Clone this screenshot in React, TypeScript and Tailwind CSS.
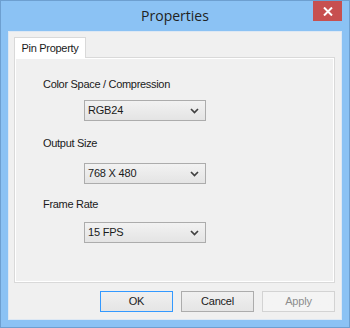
import { ReactNode } from 'react';

const ui = { fontFamily: '"Liberation Sans", Arial, sans-serif' };

function Chevron() {
  return (
    <svg width="9" height="6" viewBox="0 0 9 6" className="shrink-0">
      <path d="M1 1 L4.5 4.5 L8 1" fill="none" stroke="#404040" strokeWidth="1.7" />
    </svg>
  );
}

function Combo({ value }: { value: string }) {
  return (
    <div className="ml-[69px] flex h-[21px] w-[122px] items-center justify-between border border-[#acacac] bg-gradient-to-b from-[#f2f2f2] to-[#e4e4e4] pl-[3px] pr-[6px] text-[11px] tracking-[-0.2px] text-[#1a1a1a]">
      <span>{value}</span>
      <Chevron />
    </div>
  );
}

function Label({ children, className }: { children: ReactNode; className?: string }) {
  return (
    <div className={`ml-[28px] h-[16px] text-[11px] leading-[16px] tracking-[-0.3px] text-[#1a1a1a] ${className ?? ''}`}>
      {children}
    </div>
  );
}

function Button({ label, variant }: { label: string; variant?: 'default' | 'disabled' }) {
  const tone =
    variant === 'default'
      ? 'border-[#3399ff] text-[#1a1a1a] from-[#f0f0f0] to-[#e5e5e5]'
      : variant === 'disabled'
      ? 'border-[#d3d3d3] text-[#8d8d8d] from-[#f4f4f4] to-[#f4f4f4]'
      : 'border-[#acacac] text-[#1a1a1a] from-[#f0f0f0] to-[#e5e5e5]';
  return (
    <div className={`flex h-[21px] w-[73px] items-center justify-center border bg-gradient-to-b text-[11px] tracking-[-0.2px] ${tone}`}>
      {label}
    </div>
  );
}

export default function App() {
  return (
    <div
      className="relative flex h-[328px] w-[350px] flex-col border border-[#6d9fd0] bg-[#8bc2f4] px-[7px] pb-[7px]"
      style={ui}
    >
      {/* Title bar */}
      <div className="flex h-[30px] items-center justify-center pb-[1px]">
        <span className="text-[14px] text-[#222222]" style={{ fontFamily: '"Open Sans", "Noto Sans", sans-serif' }}>
          Properties
        </span>
      </div>
      <div className="absolute right-[7px] top-0 flex h-[20px] w-[29px] items-center justify-center bg-[#c75050]">
        <svg width="10" height="9" viewBox="0 0 10 9">
          <path d="M1 0.5 L9 8.5 M9 0.5 L1 8.5" stroke="#ffffff" strokeWidth="2" />
        </svg>
      </div>

      {/* Client area */}
      <div className="flex flex-1 flex-col border border-[#dde8f4] bg-[#f0f0f0] px-[5px] pt-[5px]">
        {/* Tab strip */}
        <div className="flex">
          <div className="relative z-10 -mb-px flex h-[21px] w-[72px] items-center justify-center border border-b-0 border-[#d9d9d9] bg-white text-[11px] tracking-[-0.3px] text-[#1a1a1a]">
            Pin Property
          </div>
        </div>
        {/* Tab panel */}
        <div className="mr-[1px] flex h-[226px] flex-col border border-[#d9d9d9] bg-[#f0f0f0] pt-[18px] shadow-[inset_1px_1px_0_#ffffff,inset_-1px_-1px_0_#ffffff]">
          <Label>Color Space / Compression</Label>
          <div className="mt-[8px]">
            <Combo value="RGB24" />
          </div>
          <Label className="mt-[14px]">Output Size</Label>
          <div className="mt-[12px]">
            <Combo value="768 X 480" />
          </div>
          <Label className="mt-[12px]">Frame Rate</Label>
          <div className="mt-[10px]">
            <Combo value="15 FPS" />
          </div>
        </div>
        {/* Buttons */}
        <div className="mt-[8px] mr-[1px] flex justify-end gap-[8px]">
          <Button label="OK" variant="default" />
          <Button label="Cancel" />
          <Button label="Apply" variant="disabled" />
        </div>
      </div>
    </div>
  );
}
